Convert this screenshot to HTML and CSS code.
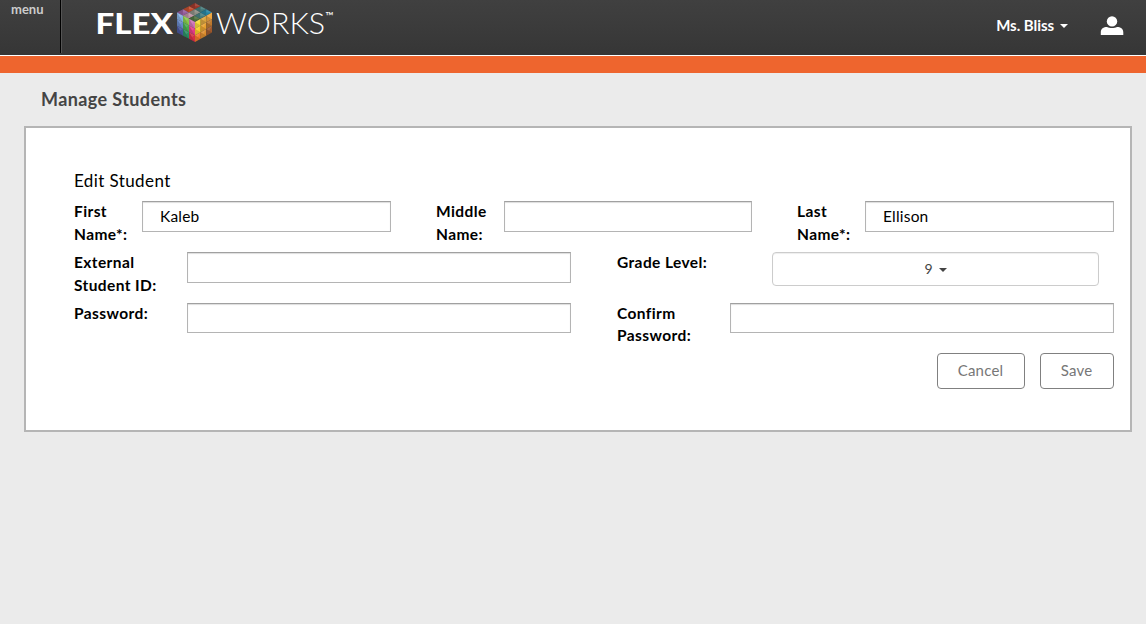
FILE: index.html
```html
<!DOCTYPE html>
<html lang="en">
<head>
<meta charset="utf-8">
<title>Manage Students</title>
<link rel="stylesheet" href="styles.css">
</head>
<body>
<header class="topbar">
  <div class="menu">menu</div>
  <svg class="logo" width="250" height="50" viewBox="0 0 250 50" role="img" aria-label="Flex Works">
    <text class="logo-flex" x="2.500" y="33.5" textLength="77.500" lengthAdjust="spacingAndGlyphs">FLEX</text>
    <g id="cube"></g>
    <text class="logo-works" x="123" y="33.5" textLength="109" lengthAdjust="spacingAndGlyphs">WORKS</text>
    <text class="logo-tm" x="232.500" y="20" textLength="8.500" lengthAdjust="spacingAndGlyphs">™</text>
  </svg>
  <div class="user">Ms. Bliss<span class="caret"></span></div>
  <svg class="avatar" width="24" height="20" viewBox="0 0 24 20"><circle cx="12" cy="5.4" r="5.2" fill="#fff"/><path d="M.8 19v-2.600C.8 12.500 3.500 11 7 11c1.500.7 3 1 5 1s3.500-.3 5-1c3.500 0 6.300 1.500 6.300 5.400V19z" fill="#fff"/></svg>
</header>
<div class="stripe"></div>
<h1 class="title">Manage Students</h1>
<main class="panel">
  <h2 class="subtitle">Edit Student</h2>
  <div class="row thirds">
    <label class="label">First<br>Name*:</label><input class="field" value="Kaleb">
    <label class="label">Middle<br>Name:</label><input class="field" value="">
    <label class="label">Last<br>Name*:</label><input class="field" value="Ellison">
  </div>
  <div class="row halves">
    <label class="label">External<br>Student ID:</label><input class="field">
    <label class="label">Grade Level:</label><button class="grade">9<span class="caret"></span></button>
  </div>
  <div class="row halves">
    <label class="label">Password:</label><input class="field short" type="password">
    <label class="label confirm">Confirm<br>Password:</label><input class="field short" type="password">
  </div>
  <div class="actions"><button class="btn cancel">Cancel</button><button class="btn save">Save</button></div>
</main>
<script src="script.js"></script>
</body>
</html>
```
FILE: styles.css
```css
* { box-sizing: border-box; }
body { margin: 0; height: 624px; background: #ebebeb; color: #000; font-family: Lato, "Open Sans", sans-serif; overflow: hidden; }
.topbar { display: flex; height: 55px; background: linear-gradient(#404040, #363636); color: #fff; }
.menu { width: 61px; height: 53px; padding: 1px 0 0 11px; border-right: 1px solid #000; box-shadow: 1px 0 #555; color: #ccc; font-size: 13px; line-height: 17px; font-weight: 700; }
.logo { margin-left: 32px; }
.logo text { fill: #fff; }
.logo-flex { font-size: 28.5px; font-weight: 900; }
.logo-works { font-size: 28.5px; font-weight: 300; }
.logo-tm { font-size: 11px; }
.user { display: flex; align-items: center; margin-left: auto; height: 49px; font-size: 15px; font-weight: 700; letter-spacing: -.05px; }
.caret { border: 4px solid transparent; border-top-color: currentColor; border-bottom: 0; margin-left: 6px; }
.user .caret { margin-top: 2px; }
.grade .caret { margin-top: 3px; }
.avatar { margin: 16px 22px 0 32px; }
.stripe { height: 18px; border-top: 1px solid #fff; background: #ee652e; }
.title { margin: 15px 0 0 41px; height: 38px; font-size: 18px; line-height: 22px; letter-spacing: .4px; color: #444; }
.panel { margin: 0 14px 0 24px; height: 306px; padding: 41px 16px 0 48px; background: #fff; border: 2px solid #b5b5b5; }
.subtitle { margin: 0; height: 32px; font-size: 17px; line-height: 23px; font-weight: 400; letter-spacing: .4px; }
.row { display: grid; align-items: start; height: 51px; }
.thirds { grid-template-columns: 68px 249px 45px 68px 248px 45px 68px 249px; }
.thirds .label:nth-of-type(2) { grid-column: 4; }
.thirds .label:nth-of-type(3) { grid-column: 7; }
.halves { grid-template-columns: 113px 384px 46px 113px 384px; }
.halves .label:nth-of-type(2) { grid-column: 4; }
.label { margin-top: -1px; font-size: 15.5px; line-height: 23px; font-weight: 700; letter-spacing: .4px; white-space: nowrap; }
.confirm { line-height: 22px; }
.field { width: 100%; height: 31px; padding: 0 17px 2px; border: 1px solid #b4b4b4; border-top-color: #a0a0a0; box-shadow: inset 0 1px 1px #ddd; background: #fff; color: #000; font: 15.5px Lato, sans-serif; letter-spacing: .2px; }
.short { height: 30px; }
.grade { display: flex; align-items: center; justify-content: center; width: 327px; height: 34px; margin-left: 42px; padding: 0 0 2px; border: 1px solid #ccc; border-radius: 4px; box-shadow: inset 0 1px 1px #eee; background: #fff; color: #444; font: 14px Lato, sans-serif; }
.actions { display: flex; justify-content: flex-end; gap: 15px; margin-top: -1px; }
.btn { height: 36px; padding: 0 1px 3px 0; border: 1px solid #808080; border-radius: 4px; background: #fff; color: #777; font: 15px Lato, sans-serif; letter-spacing: .2px; }
.cancel { width: 88px; }
.save { width: 74px; }
```
FILE: script.js
```js
// Each face: origin, column edge vector, row edge vector, then colours by row.
const faces = [
  [[102, 3], [17, 9.5], [-18, 9.5], [
    ['#9c3528', '#447a7a', '#2583a0'],
    ['#c34c2c', '#8b8d83', '#478080'],
    ['#93599b', '#bb91a2', '#4d713d']]],
  [[84, 12.5], [18, 9.5], [0, 20], [
    ['#83afe0', '#86c94a', '#cd72b7'],
    ['#6587c7', '#49a84e', '#e43b85'],
    ['#45549b', '#2a8d62', '#d62d45']]],
  [[102, 22], [17, -9.5], [0, 20], [
    ['#f5dc36', '#dba43c', '#efa43c'],
    ['#f9cf26', '#e9a12e', '#bd782d'],
    ['#f37928', '#dc8c2c', '#9d572b']]]
];
const cube = document.getElementById('cube');
const triangle = (points, fill, opacity) => {
  const p = document.createElementNS('http://www.w3.org/2000/svg', 'polygon');
  p.setAttribute('points', points.map(v => v.join(',')).join(' '));
  p.setAttribute('fill', fill);
  p.setAttribute('opacity', opacity);
  cube.appendChild(p);
};
for (const [origin, u, v, colours] of faces) {
  const at = (x, y) => [origin[0] + u[0] * x / 3 + v[0] * y / 3, origin[1] + u[1] * x / 3 + v[1] * y / 3];
  for (let y = 0; y < 3; y++) for (let x = 0; x < 3; x++) {
    triangle([at(x, y), at(x + 1, y), at(x + 1, y + 1), at(x, y + 1)], colours[y][x], 1);
    triangle([at(x, y), at(x + 1, y + 1), at(x, y + 1)], '#222', .16);
    triangle([at(x, y), at(x + 1, y), at(x + .5, y + .5)], '#fff', .12);
  }
}
```
